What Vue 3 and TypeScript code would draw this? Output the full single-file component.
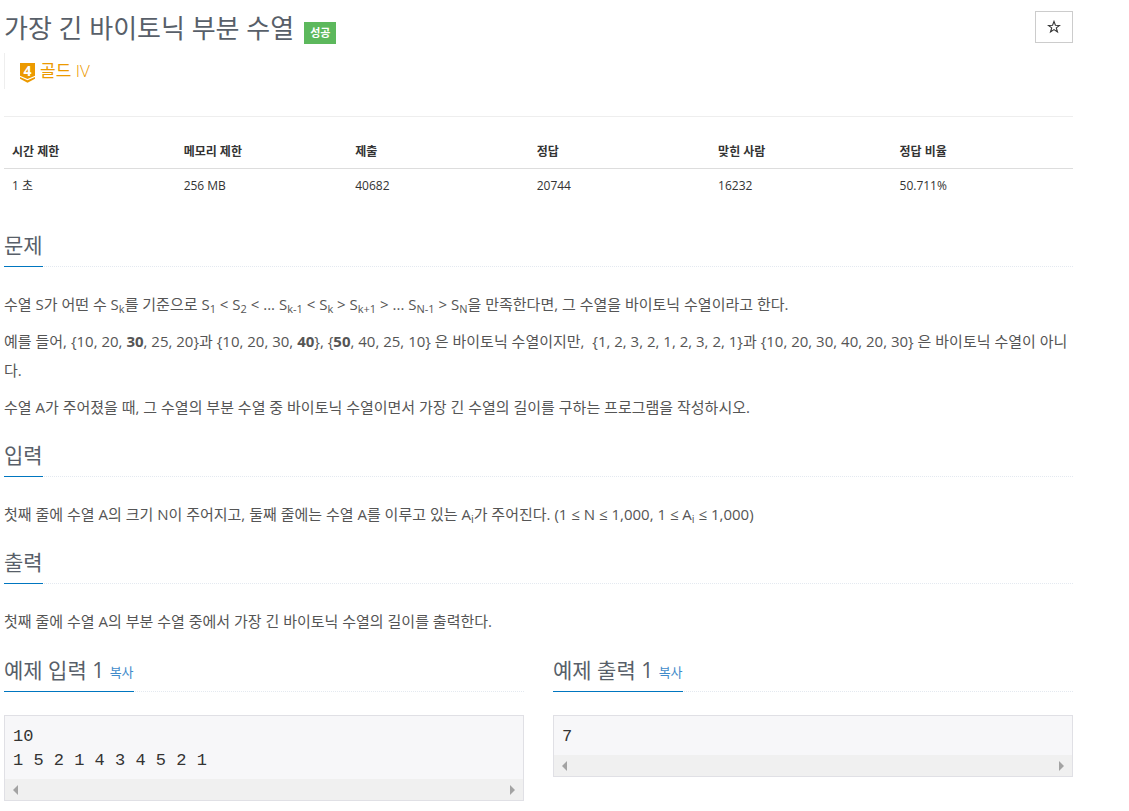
<script setup lang="ts">
import { ref } from 'vue'

interface Stat {
  label: string
  value: string
  width: string
}

interface Sample {
  id: string
  title: string
  text: string
}

const stats: Stat[] = [
  { label: '시간 제한', value: '1 초', width: 'narrow' },
  { label: '메모리 제한', value: '256 MB', width: 'narrow' },
  { label: '제출', value: '40682', width: 'wide' },
  { label: '정답', value: '20744', width: 'wide' },
  { label: '맞힌 사람', value: '16232', width: 'wide' },
  { label: '정답 비율', value: '50.711%', width: 'wide' },
]

const samples: Sample[] = [
  { id: 'sample-input-1', title: '예제 입력 1', text: '10\n1 5 2 1 4 3 4 5 2 1' },
  { id: 'sample-output-1', title: '예제 출력 1', text: '7' },
]

const favorite = ref(false)

function copy(text: string): void {
  navigator.clipboard?.writeText(text)
}
</script>

<template>
  <main class="page">
    <header class="page-header">
      <div class="title-row">
        <h1 class="title">가장 긴 바이토닉 부분 수열</h1>
        <span class="badge">성공</span>
        <button
          class="star"
          type="button"
          aria-label="즐겨찾기"
          :aria-pressed="favorite"
          @click="favorite = !favorite"
        >
          <svg viewBox="0 0 14 14" width="14" height="14" aria-hidden="true">
            <path
              d="M7 1.4 8.4 5.3 12.6 5.4 9.3 7.9 10.5 12 7 9.6 3.5 12 4.7 7.9 1.4 5.4 5.6 5.3Z"
              :fill="favorite ? '#333' : 'none'"
              stroke="#333"
              stroke-width="1.1"
            />
          </svg>
        </button>
      </div>
      <div class="tier">
        <svg class="medal" viewBox="0 0 16 21" width="16" height="21" aria-hidden="true">
          <path d="M0 0H15V12.8L7.5 16 0 12.8Z" fill="#ec9a00" />
          <path d="M0 14 7.5 17.2 15 14V15.8L7.5 19.8 0 15.8Z" fill="#ec9a00" />
          <text x="7.5" y="12.6" text-anchor="middle" class="medal-digit">4</text>
        </svg>
        <span>골드 <span class="tier-level">IV</span></span>
      </div>
    </header>

    <table class="stats">
      <thead>
        <tr>
          <th v-for="s in stats" :key="s.label" :class="s.width" scope="col">{{ s.label }}</th>
        </tr>
      </thead>
      <tbody>
        <tr>
          <td v-for="s in stats" :key="s.label">{{ s.value }}</td>
        </tr>
      </tbody>
    </table>

    <section class="section">
      <div class="headline"><h2>문제</h2></div>
      <p>
        수열 S가 어떤 수 S<sub>k</sub>를 기준으로 S<sub>1</sub> &lt; S<sub>2</sub> &lt; ... S<sub>k-1</sub> &lt;
        S<sub>k</sub> &gt; S<sub>k+1</sub> &gt; ... S<sub>N-1</sub> &gt; S<sub>N</sub>을 만족한다면, 그 수열을
        바이토닉 수열이라고 한다.
      </p>
      <p>
        예를 들어, {10, 20, <strong>30</strong>, 25, 20}과 {10, 20, 30, <strong>40</strong>},
        {<strong>50</strong>, 40, 25, 10} 은 바이토닉 수열이지만,&nbsp; {1, 2, 3, 2, 1, 2, 3, 2, 1}과 {10, 20, 30,
        40, 20, 30} 은 바이토닉 수열이 아니다.
      </p>
      <p>
        수열 A가 주어졌을 때, 그 수열의 부분 수열 중 바이토닉 수열이면서 가장 긴 수열의 길이를 구하는 프로그램을
        작성하시오.
      </p>
    </section>

    <section class="section">
      <div class="headline"><h2>입력</h2></div>
      <p>
        첫째 줄에 수열 A의 크기 N이 주어지고, 둘째 줄에는 수열 A를 이루고 있는 A<sub>i</sub>가 주어진다. (1 ≤ N ≤
        1,000, 1 ≤ A<sub>i</sub> ≤ 1,000)
      </p>
    </section>

    <section class="section">
      <div class="headline"><h2>출력</h2></div>
      <p>첫째 줄에 수열 A의 부분 수열 중에서 가장 긴 바이토닉 수열의 길이를 출력한다.</p>
    </section>

    <div class="samples">
      <section v-for="s in samples" :key="s.id">
        <div class="headline">
          <h2>
            {{ s.title }}
            <button class="copy" type="button" @click="copy(s.text)">복사</button>
          </h2>
        </div>
        <div class="sample-box">
          <pre :id="s.id">{{ s.text }}</pre>
          <div class="scrollbar" aria-hidden="true">
            <svg viewBox="0 0 5 10" width="5" height="10"><path d="M5 0V10L0 5Z" fill="#a3a3a3" /></svg>
            <svg viewBox="0 0 5 10" width="5" height="10"><path d="M0 0V10L5 5Z" fill="#a3a3a3" /></svg>
          </div>
        </div>
      </section>
    </div>
  </main>
</template>

<style>
body {
  margin: 0;
  background: #fff;
}
</style>

<style scoped>
.page {
  box-sizing: border-box;
  padding: 0 56px 10px 4px;
  color: #333;
  font-family: 'Open Sans', 'Noto Sans CJK KR', sans-serif;
  font-size: 12px;
}

.page-header {
  padding-bottom: 27px;
  border-bottom: 1px solid #eee;
}

.title-row {
  display: flex;
  align-items: flex-start;
  padding-top: 11px;
}

.title {
  margin: 0;
  color: #585f69;
  font-size: 26px;
  font-weight: 400;
  line-height: 34px;
}

.badge {
  margin: 11px 0 0 10px;
  padding: 0 6px;
  background: #5cb85c;
  color: #fff;
  font-size: 11px;
  font-weight: 700;
  line-height: 22px;
}

.star {
  display: flex;
  align-items: center;
  justify-content: center;
  box-sizing: border-box;
  width: 38px;
  height: 32px;
  margin-left: auto;
  padding: 0;
  border: 1px solid #ccc;
  background: #fff;
  cursor: pointer;
}

.tier {
  display: flex;
  align-items: center;
  gap: 4px;
  height: 36px;
  margin-top: 8px;
  padding-left: 15px;
  border-left: 1px solid #eee;
  color: #ec9a00;
  font-size: 17px;
  line-height: 24px;
}

.tier-level {
  font-weight: 300;
}

.medal {
  margin-top: 4px;
  overflow: visible;
}

.medal-digit {
  fill: #fff;
  font-size: 14px;
  font-weight: 700;
}

.stats {
  width: 100%;
  margin-top: 18px;
  border-collapse: collapse;
  table-layout: fixed;
  line-height: 17px;
}

.stats th,
.stats td {
  padding: 8px;
  text-align: left;
}

.stats th {
  border-bottom: 1px solid #ddd;
  font-weight: 700;
}

.narrow {
  width: 16%;
}

.wide {
  width: 17%;
}

.section {
  margin-top: 19px;
}

.stats + .section {
  margin-top: 29px;
}

.headline {
  display: flex;
  margin-bottom: 23px;
  border-bottom: 1px dotted #e4e9f0;
}

.headline h2 {
  margin: 0 0 -1px;
  padding-bottom: 7px;
  border-bottom: 1px solid #0076c0;
  color: #585f69;
  font-size: 21px;
  font-weight: 400;
  line-height: 28px;
}

.section p {
  margin: 0 0 8px;
  color: #555;
  font-size: 15px;
  line-height: 29px;
}

.section sub {
  position: relative;
  bottom: -3px;
  font-size: 11px;
  line-height: 0;
  vertical-align: baseline;
}

.samples {
  display: grid;
  grid-template-columns: repeat(2, minmax(0, 1fr));
  align-items: start;
  gap: 29px;
  margin-top: 20px;
}

.copy {
  padding: 0;
  border: 0;
  background: none;
  color: #428bca;
  font-family: inherit;
  font-size: 13px;
  line-height: 18px;
  vertical-align: middle;
  cursor: pointer;
}

.sample-box {
  border: 1px solid #e0e0e5;
  background: #f7f7f9;
}

.sample-box pre {
  margin: 0;
  padding: 9px 8px 6px;
  overflow: hidden;
  font-family: 'Liberation Mono', monospace;
  font-size: 17px;
  line-height: 24px;
}

.scrollbar {
  display: flex;
  align-items: center;
  justify-content: space-between;
  height: 21px;
  padding: 0 8px;
  background: #f0f0f0;
}
</style>
